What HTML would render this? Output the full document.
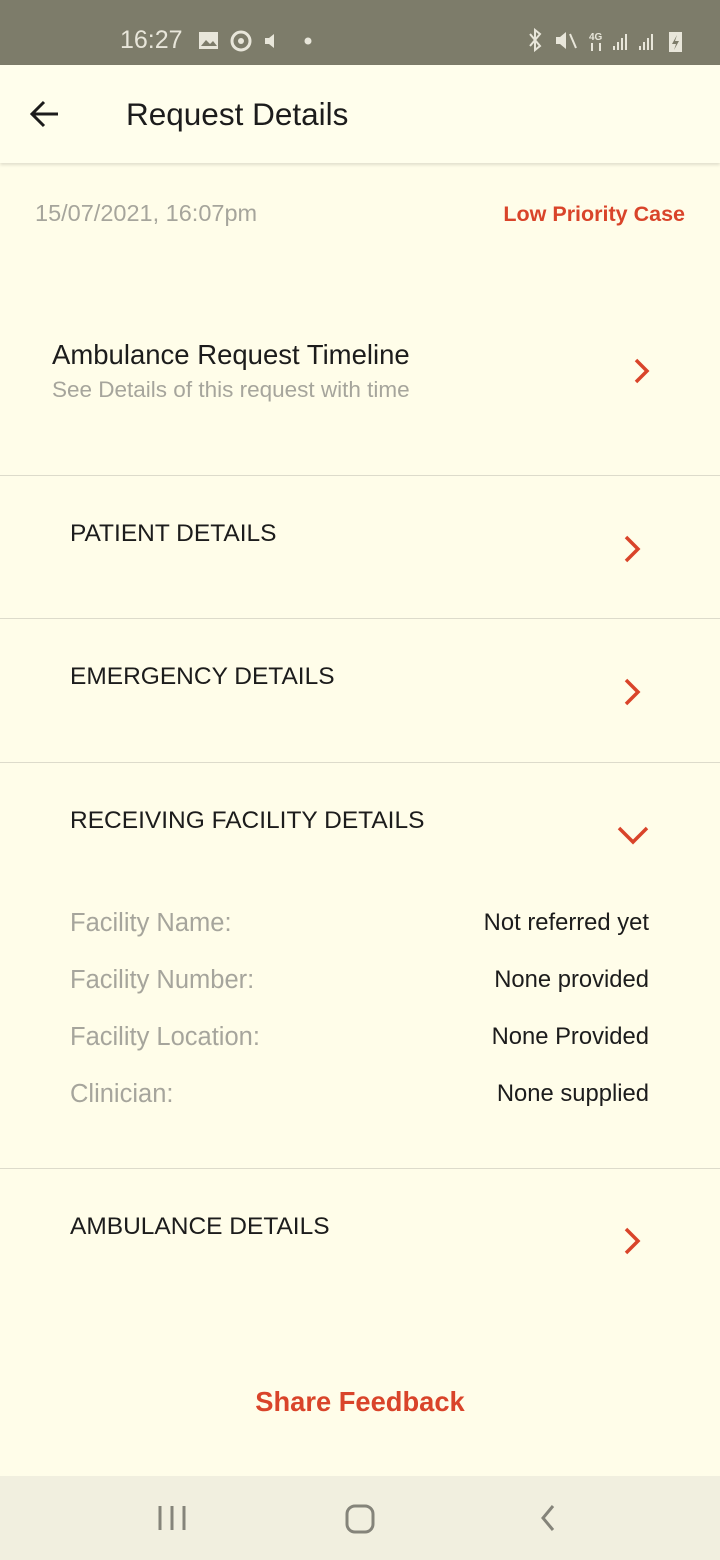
<!DOCTYPE html>
<html><head><meta charset="utf-8"><style>
*{margin:0;padding:0;box-sizing:border-box}
body{width:720px;height:1560px;background:#fffde9;font-family:"Liberation Sans",sans-serif;position:relative;overflow:hidden;color:#1c1c1c}
.a{position:absolute;white-space:nowrap}
.sb{left:0;top:0;width:720px;height:65px;background:#7d7c6a}
.hd{left:0;top:65px;width:720px;height:98px;background:#fffeec;box-shadow:0 2px 3px rgba(0,0,0,.12)}
.line{left:0;width:720px;height:1px;background:#dddbcb}
.red{color:#d9442a}
.g{color:#a6a59c}
.h{font-size:24.5px;color:#1c1c1c}
.k{font-size:25.5px;color:#a6a59c}
.v{font-size:23.8px;right:71px;color:#1c1c1c}
.nav{left:0;top:1476px;width:720px;height:84px;background:#f1efdf}
</style></head><body>
<div class="a sb"></div>
<div class="a" style="left:120px;top:26px;font-size:25px;color:#e8e6da">16:27</div>
<svg class="a" style="left:198px;top:30px" width="124" height="22"><rect x="1" y="2" width="19" height="17" fill="#e8e6da"/><path d="M3 16l5-6 4 4 3-3 4 5z" fill="#7d7c6a"/><circle cx="43" cy="11" r="9" fill="none" stroke="#e8e6da" stroke-width="3"/><circle cx="43" cy="11" r="3" fill="#e8e6da"/><path d="M67 8h4l5-4v14l-5-4h-4z" fill="#e8e6da"/><circle cx="110" cy="11" r="3.5" fill="#e8e6da"/></svg>
<svg class="a" style="left:526px;top:28px" width="162" height="26"><path d="M4 6l10 12-5 4V2l5 4L4 18" fill="none" stroke="#e8e6da" stroke-width="2"/><path d="M30 9h4l6-5v17l-6-5h-4z" fill="#e8e6da"/><path d="M44 6l6 14" stroke="#e8e6da" stroke-width="2"/><text x="63" y="12" font-size="10" fill="#e8e6da" font-family="Liberation Sans" font-weight="bold">4G</text><path d="M66 15v8M74 15v8" stroke="#e8e6da" stroke-width="2"/><path d="M88 22v-4M92 22v-8M96 22v-12M100 22v-16M114 22v-4M118 22v-8M122 22v-12M126 22v-16" stroke="#e8e6da" stroke-width="2"/><rect x="143" y="4" width="13" height="20" fill="#e8e6da"/><path d="M151 7l-5 9h4l-2 6 5-9h-4z" fill="#7d7c6a"/></svg>
<div class="a hd"></div>
<svg class="a" style="left:28px;top:98px" width="34" height="32"><path d="M30 16H4M16 4L4 16l12 12" fill="none" stroke="#1c1c1c" stroke-width="3"/></svg>
<div class="a" style="left:126px;top:96px;font-size:31.5px;color:#1c1c1c">Request Details</div>
<div class="a g" style="left:35px;top:200px;font-size:23.5px">15/07/2021, 16:07pm</div>
<div class="a red" style="right:35px;top:202px;font-size:21.5px;font-weight:bold">Low Priority Case</div>
<div class="a" style="left:52px;top:339px;font-size:27.5px">Ambulance Request Timeline</div>
<div class="a g" style="left:52px;top:377px;font-size:22.5px">See Details of this request with time</div>
<svg class="a" style="left:632px;top:357px" width="20" height="28"><path d="M4 3l11 11L4 25" fill="none" stroke="#d9442a" stroke-width="3.5"/></svg>
<div class="a line" style="top:475px"></div>
<div class="a h" style="left:70px;top:520px">PATIENT DETAILS</div>
<svg class="a" style="left:622px;top:534px" width="22" height="30"><path d="M4 3l12 12L4 27" fill="none" stroke="#d9442a" stroke-width="3.5"/></svg>
<div class="a line" style="top:618px"></div>
<div class="a h" style="left:70px;top:663px">EMERGENCY DETAILS</div>
<svg class="a" style="left:622px;top:677px" width="22" height="30"><path d="M4 3l12 12L4 27" fill="none" stroke="#d9442a" stroke-width="3.5"/></svg>
<div class="a line" style="top:762px"></div>
<div class="a h" style="left:70px;top:807px">RECEIVING FACILITY DETAILS</div>
<svg class="a" style="left:616px;top:824px" width="34" height="22"><path d="M3 4l14 14L31 4" fill="none" stroke="#d9442a" stroke-width="3.5"/></svg>
<div class="a k" style="left:70px;top:909px">Facility Name:</div><div class="a v" style="top:909px">Not referred yet</div>
<div class="a k" style="left:70px;top:966px">Facility Number:</div><div class="a v" style="top:966px">None provided</div>
<div class="a k" style="left:70px;top:1023px">Facility Location:</div><div class="a v" style="top:1023px">None Provided</div>
<div class="a k" style="left:70px;top:1080px">Clinician:</div><div class="a v" style="top:1080px">None supplied</div>
<div class="a line" style="top:1168px"></div>
<div class="a h" style="left:70px;top:1213px">AMBULANCE DETAILS</div>
<svg class="a" style="left:622px;top:1226px" width="22" height="30"><path d="M4 3l12 12L4 27" fill="none" stroke="#d9442a" stroke-width="3.5"/></svg>
<div class="a red" style="left:0;width:720px;text-align:center;top:1386px;font-size:27.3px;font-weight:bold">Share Feedback</div>
<div class="a nav"></div>
<svg class="a" style="left:150px;top:1500px" width="420" height="40"><path d="M10 6v24M22 6v24M34 6v24" stroke="#85847a" stroke-width="3"/><rect x="197" y="6" width="26" height="26" rx="8" fill="none" stroke="#85847a" stroke-width="3"/><path d="M403 6l-10 12 10 12" fill="none" stroke="#85847a" stroke-width="3"/></svg>
</body></html>
